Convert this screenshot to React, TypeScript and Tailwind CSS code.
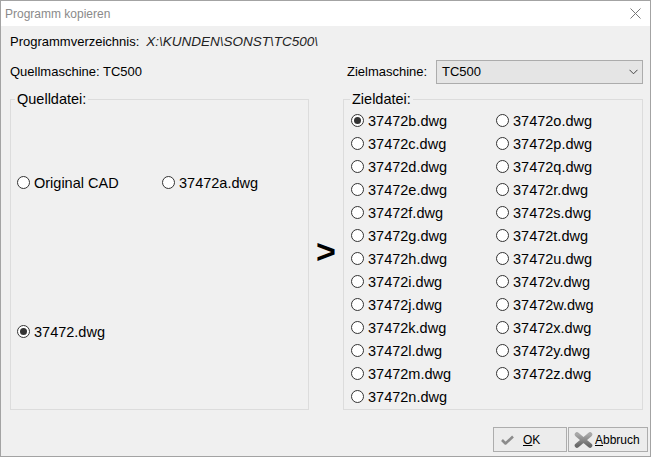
import React from "react";

const links = ["b", "c", "d", "e", "f", "g", "h", "i", "j", "k", "l", "m", "n"];
const rechts = ["o", "p", "q", "r", "s", "t", "u", "v", "w", "x", "y", "z"];

function Radio({ label, checked }: { label: string; checked?: boolean }) {
  return (
    <div className="flex h-[23px] items-center">
      <span className="flex h-[13px] w-[13px] shrink-0 items-center justify-center rounded-full border border-[#333] bg-white">
        {checked && <span className="h-[7px] w-[7px] rounded-full bg-[#333]" />}
      </span>
      <span className="ml-[4px] text-[14.5px] leading-[16px] text-black">{label}</span>
    </div>
  );
}

export default function App() {
  return (
    <div className="flex h-[457px] w-[651px] flex-col border border-[#a3a3a3] bg-[#f0f0f0] font-['Liberation_Sans',Arial,sans-serif] text-black">
      {/* Titelleiste */}
      <div className="flex h-[25px] shrink-0 items-center justify-between bg-white pl-[4px] pr-[9px]">
        <span className="text-[12px] text-[#8a8a8a]">Programm kopieren</span>
        <svg width="11" height="11" viewBox="0 0 11 11">
          <path d="M0.5 0.5 L10.5 10.5 M10.5 0.5 L0.5 10.5" stroke="#777" strokeWidth="1" />
        </svg>
      </div>

      <div className="flex flex-col pl-[9px] pr-[7px]">
        {/* Verzeichnis */}
        <div className="mt-[8px] flex h-[16px] items-center text-[13px]">
          <span>Programmverzeichnis:</span>
          <span className="ml-[7px] text-[13.5px] italic text-[#222]">X:\KUNDEN\SONST\TC500\</span>
        </div>

        {/* Maschinen */}
        <div className="mt-[10px] flex h-[24px] items-center text-[13px]">
          <span className="flex-1">Quellmaschine: TC500</span>
          <div className="flex w-[296px] items-center justify-between">
            <span>Zielmaschine:</span>
            <div className="flex h-[24px] w-[207px] items-center justify-between border border-[#acacac] bg-[#e5e5e5] pl-[5px] pr-[4px]">
              <span>TC500</span>
              <svg width="9" height="6" viewBox="0 0 9 6">
                <path d="M0.5 0.8 L4.5 4.8 L8.5 0.8" stroke="#444" strokeWidth="1" fill="none" />
              </svg>
            </div>
          </div>
        </div>

        {/* Gruppen */}
        <div className="mt-[7px] flex">
          <fieldset className="h-[319px] w-[299px] min-w-0 border border-[#dcdcdc]">
            <legend className="ml-[4px] px-[2px] text-[14.5px] leading-[16px]">Quelldatei:</legend>
            <div className="flex flex-col pl-[6px]">
              <div className="mt-[64px] grid grid-cols-[145px_1fr]">
                <Radio label="Original CAD" />
                <Radio label="37472a.dwg" />
              </div>
              <div className="mt-[126px]">
                <Radio label="37472.dwg" checked />
              </div>
            </div>
          </fieldset>

          <div className="flex w-[34px] items-center justify-center">
            <span className="text-[34px] font-bold leading-none">&gt;</span>
          </div>

          <fieldset className="h-[319px] w-[300px] min-w-0 border border-[#dcdcdc]">
            <legend className="ml-[6px] px-[2px] text-[14.5px] leading-[16px]">Zieldatei:</legend>
            <div className="grid grid-flow-col grid-cols-[145px_1fr] grid-rows-[repeat(13,23px)] pl-[7px] pt-[2px]">
              {links.map((c) => (
                <Radio key={c} label={`37472${c}.dwg`} checked={c === "b"} />
              ))}
              {rechts.map((c) => (
                <Radio key={c} label={`37472${c}.dwg`} />
              ))}
            </div>
          </fieldset>
        </div>
      </div>

      {/* Buttons */}
      <div className="mt-[17px] flex justify-end gap-[1px] pr-[2px] text-[12px]">
        <button className="flex h-[25px] w-[74px] items-center border border-[#adadad] bg-[#ececec] pl-[7px]">
          <svg width="13" height="10" viewBox="0 0 13 10">
            <path d="M1 5 L4.5 8.5 L12 1.5" stroke="#8c8c8c" strokeWidth="2.6" fill="none" strokeLinejoin="round" />
          </svg>
          <span className="ml-[9px]">
            <span className="underline">O</span>K
          </span>
        </button>
        <button className="flex h-[25px] w-[80px] items-center border border-[#adadad] bg-[#ececec] pl-[5px]">
          <svg width="19" height="16" viewBox="0 0 19 16">
            <defs>
              <linearGradient id="xg" x1="0" y1="0" x2="0" y2="1">
                <stop offset="0" stopColor="#a8a8a8" />
                <stop offset="1" stopColor="#6a6a6a" />
              </linearGradient>
            </defs>
            <path d="M3 2.5 L16 13.5 M16 2.5 L3 13.5" stroke="url(#xg)" strokeWidth="4.6" strokeLinecap="round" />
          </svg>
          <span className="ml-[2px]">
            <span className="underline">A</span>bbruch
          </span>
        </button>
      </div>
    </div>
  );
}
